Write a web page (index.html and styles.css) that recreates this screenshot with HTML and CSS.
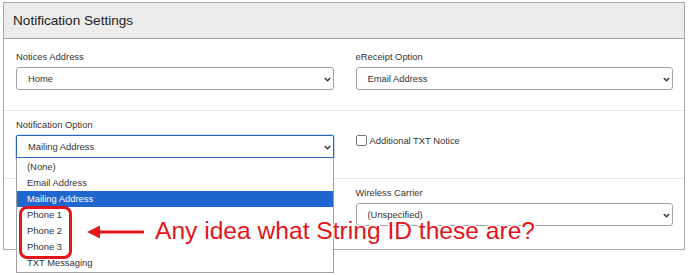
FILE: index.html
```html
<!DOCTYPE html>
<html>
<head>
<meta charset="utf-8">
<link rel="stylesheet" href="styles.css">
</head>
<body>
<div class="panel">
  <div class="panel-head">Notification Settings</div>
  <div class="panel-body">
    <div class="row">
      <div class="field">
        <div class="label">Notices Address</div>
        <div class="select"><span>Home</span><svg class="chev" width="7" height="5" viewBox="0 0 7 5"><polyline points="0.8,1 3.5,3.8 6.2,1" fill="none" stroke="#333" stroke-width="1.4"/></svg></div>
      </div>
      <div class="field">
        <div class="label">eReceipt Option</div>
        <div class="select"><span>Email Address</span><svg class="chev" width="7" height="5" viewBox="0 0 7 5"><polyline points="0.8,1 3.5,3.8 6.2,1" fill="none" stroke="#333" stroke-width="1.4"/></svg></div>
      </div>
    </div>
    <div class="row">
      <div class="field">
        <div class="label">Notification Option</div>
        <div class="select-wrap">
          <div class="select focus"><span>Mailing Address</span><svg class="chev" width="7" height="5" viewBox="0 0 7 5"><polyline points="0.8,1 3.5,3.8 6.2,1" fill="none" stroke="#333" stroke-width="1.4"/></svg></div>
          <ul class="options">
            <li>(None)</li>
            <li>Email Address</li>
            <li class="active">Mailing Address</li>
            <li>Phone 1</li>
            <li>Phone 2</li>
            <li>Phone 3</li>
            <li>TXT Messaging</li>
          </ul>
        </div>
      </div>
      <div class="field">
        <div class="label blank">&nbsp;</div>
        <div class="check-row"><span class="checkbox"></span><span>Additional TXT Notice</span></div>
      </div>
    </div>
    <div class="row last">
      <div class="field"></div>
      <div class="field">
        <div class="label">Wireless Carrier</div>
        <div class="select"><span>(Unspecified)</span><svg class="chev" width="7" height="5" viewBox="0 0 7 5"><polyline points="0.8,1 3.5,3.8 6.2,1" fill="none" stroke="#333" stroke-width="1.4"/></svg></div>
      </div>
    </div>
  </div>
</div>

<div class="red-box"></div>
<svg class="arrow" width="60" height="16" viewBox="0 0 60 16">
  <line x1="10" y1="8" x2="57" y2="8" stroke="#e3141b" stroke-width="3"/>
  <polygon points="0,8 13,1.5 13,14.5" fill="#e3141b"/>
</svg>
<div class="note">Any idea what String ID these are?</div>
</body>
</html>
```

FILE: styles.css
```css
html, body {
  margin: 0;
  padding: 0;
  background: #fff;
}
body {
  position: relative;
  width: 690px;
  height: 275px;
  overflow: hidden;
  font-family: "Liberation Sans", Arial, sans-serif;
  color: #333;
}
.panel {
  box-sizing: border-box;
  width: 682px;
  margin: 2px 0 0 3px;
  border: 1px solid #a8a8a8;
  background: #fff;
}
.panel-head {
  height: 35px;
  line-height: 36px;
  padding-left: 9px;
  background: #ececec;
  border-bottom: 1px solid #a0a0a0;
  font-size: 13.6px;
  color: #222;
}
.panel-body {
  padding: 4px 0 3px;
}
.row {
  display: grid;
  grid-template-columns: 1fr 1fr;
  column-gap: 22px;
  padding: 7px 11px 20px 12px;
  border-bottom: 1px solid #e8e8e8;
}
.row.last {
  border-bottom: none;
}
.label {
  font-size: 9.4px;
  line-height: 13px;
  height: 13px;
  margin-bottom: 4px;
  color: #333;
}
.select-wrap {
  position: relative;
}
.select {
  box-sizing: border-box;
  height: 23px;
  border: 1px solid #a3a3a3;
  border-radius: 3px;
  display: flex;
  align-items: center;
  justify-content: space-between;
  padding: 0 2px 0 11px;
  font-size: 9.4px;
  color: #333;
  background: #fff;
}
.select.focus {
  border-color: #2a63b8;
  box-shadow: 0 0 0 1px rgba(60, 120, 210, 0.25);
  border-radius: 2px 2px 0 0;
}
.chev {
  display: block;
  margin-top: 1px;
}
.options {
  position: absolute;
  top: 100%;
  left: 0;
  right: 0;
  margin: 0;
  padding: 1px 0 1px;
  list-style: none;
  background: #fff;
  border: 1px solid #a0a0a0;
  border-top: none;
  z-index: 5;
}
.options li {
  height: 16px;
  line-height: 16px;
  padding-left: 10px;
  font-size: 9.4px;
  color: #333;
}
.options li.active {
  background: #1f66cf;
  color: #fff;
}
.check-row {
  display: flex;
  align-items: center;
  gap: 3px;
  margin-top: 3px;
  font-size: 9.4px;
  color: #333;
}
.checkbox {
  box-sizing: border-box;
  width: 11px;
  height: 11px;
  border: 1px solid #767676;
  border-radius: 2px;
  background: #fff;
}
.red-box {
  position: absolute;
  left: 19px;
  top: 206px;
  width: 53px;
  height: 53px;
  box-sizing: border-box;
  border: 3px solid #e3141b;
  border-radius: 8px;
  z-index: 10;
}
.arrow {
  position: absolute;
  left: 87px;
  top: 224px;
  z-index: 10;
}
.note {
  position: absolute;
  left: 155px;
  top: 217px;
  font-size: 24.6px;
  line-height: 28px;
  color: #e3141b;
  white-space: nowrap;
  z-index: 10;
  text-shadow: 1px 0 0 #fff, -1px 0 0 #fff, 0 1px 0 #fff, 0 -1px 0 #fff, 1px 1px 0 #fff, -1px -1px 0 #fff, 1px -1px 0 #fff, -1px 1px 0 #fff;
}
```
